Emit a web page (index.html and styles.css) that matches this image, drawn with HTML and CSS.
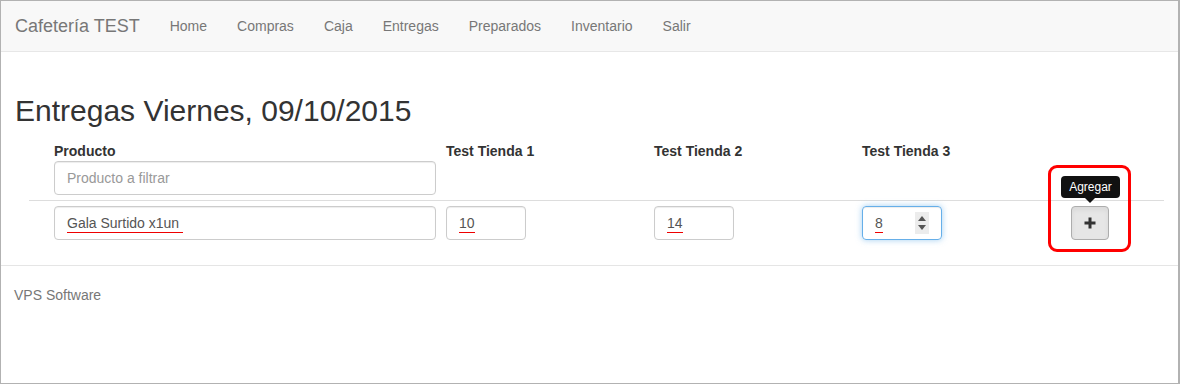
FILE: index.html
```html
<!DOCTYPE html>
<html lang="es">

<head>
  <meta charset="UTF-8" />
  <meta name="viewport" content="width=device-width, initial-scale=1.0" />
  <title>Entregas</title>
  <link rel="stylesheet" href="styles.css">
</head>

<body>
  <div class="frame">

    <nav class="navbar">
      <a class="brand" href="#">Cafetería TEST</a>
      <ul class="nav">
        <li><a href="#">Home</a></li>
        <li><a href="#">Compras</a></li>
        <li><a href="#">Caja</a></li>
        <li><a href="#">Entregas</a></li>
        <li><a href="#">Preparados</a></li>
        <li><a href="#">Inventario</a></li>
        <li><a href="#">Salir</a></li>
      </ul>
    </nav>

    <div class="container">
      <h2>Entregas Viernes, 09/10/2015</h2>

      <div class="grid">
        <!-- cabecera -->
        <div class="cell head"></div>
        <div class="cell head">
          <div class="label">Producto</div>
          <div class="form-control placeholder">Producto a filtrar</div>
        </div>
        <div class="cell head"><div class="label">Test Tienda 1</div></div>
        <div class="cell head"><div class="label">Test Tienda 2</div></div>
        <div class="cell head"><div class="label">Test Tienda 3</div></div>
        <div class="cell head"></div>

        <!-- fila -->
        <div class="cell"></div>
        <div class="cell">
          <div class="form-control"><span class="spell">Gala Surtido x1un&nbsp;</span></div>
        </div>
        <div class="cell">
          <div class="form-control num"><span class="spell">10</span></div>
        </div>
        <div class="cell">
          <div class="form-control num"><span class="spell">14</span></div>
        </div>
        <div class="cell">
          <div class="form-control num focus">
            <span class="spell">8</span>
            <span class="spinner">
              <i class="up"></i>
              <i class="down"></i>
            </span>
          </div>
        </div>
        <div class="cell action">
          <button class="btn" title="Agregar">
            <svg width="12" height="12" viewBox="0 0 12 12">
              <rect x="4.5" y="0.5" width="3" height="11" fill="#333" />
              <rect x="0.5" y="4.5" width="11" height="3" fill="#333" />
            </svg>
          </button>
          <div class="tooltip">Agregar</div>
          <div class="highlight"></div>
        </div>
      </div>
    </div>

    <footer class="footer">VPS Software</footer>

  </div>
</body>

</html>
```

FILE: styles.css
```css
* {
  box-sizing: border-box;
}

body {
  margin: 0;
  font-family: "Liberation Sans", Arial, sans-serif;
  font-size: 14px;
  line-height: 20px;
  color: #333;
  background: #fff;
}

.frame {
  height: 384px;
  border: 1px solid #b2b2b2;
  border-right-width: 2px;
  overflow: hidden;
}

/* barra de navegación */
.navbar {
  height: 51px;
  background: #f8f8f8;
  border-bottom: 1px solid #e7e7e7;
  display: flex;
  padding-left: 14px;
  margin-bottom: 20px;
}

.brand {
  font-size: 18px;
  line-height: 20px;
  padding: 15px 15px 15px 0;
  color: #777;
  text-decoration: none;
}

.nav {
  margin: 0;
  padding: 0;
  list-style: none;
  display: flex;
}

.nav a {
  display: block;
  padding: 15px;
  color: #777;
  text-decoration: none;
}

.container {
  padding: 22px 14px 0;
}

h2 {
  margin: 0 0 10px;
  font-size: 30px;
  font-weight: 400;
  line-height: 33px;
  color: #333;
}

/* tabla */
.grid {
  display: grid;
  grid-template-columns: 20px 392px 208px 208px 208px 1fr;
  margin: 0 0 20px 14px;
}

.cell {
  padding: 5px;
}

.cell:not(.head) {
  border-top: 1px solid #ddd;
}

.label {
  font-weight: 700;
  line-height: 19px;
}

.form-control {
  height: 34px;
  padding: 6px 12px;
  border: 1px solid #ccc;
  border-radius: 4px;
  color: #555;
  box-shadow: inset 0 1px 1px rgba(0, 0, 0, .075);
  white-space: nowrap;
  position: relative;
}

.form-control.placeholder {
  color: #999;
}

.form-control.num {
  width: 80px;
}

.form-control.focus {
  border-color: #66afe9;
  box-shadow: inset 0 1px 1px rgba(0, 0, 0, .075), 0 0 6px rgba(102, 175, 233, .6);
}

.spell {
  border-bottom: 1px solid #e00;
  padding-bottom: 1px;
}

.spinner {
  position: absolute;
  right: 12px;
  top: 5px;
  width: 14px;
  height: 22px;
  background: #ececec;
  display: flex;
  flex-direction: column;
  align-items: center;
  justify-content: center;
  gap: 4px;
}

.spinner i {
  width: 0;
  height: 0;
  border-left: 4px solid transparent;
  border-right: 4px solid transparent;
}

.spinner .up {
  border-bottom: 5px solid #555;
}

.spinner .down {
  border-top: 5px solid #555;
}

.action {
  position: relative;
}

.btn {
  width: 38px;
  height: 34px;
  margin-left: 1px;
  background: #e6e6e6;
  border: 1px solid #adadad;
  border-radius: 4px;
  box-shadow: inset 0 3px 5px rgba(0, 0, 0, .06);
  display: flex;
  align-items: center;
  justify-content: center;
  padding: 0;
}

.tooltip {
  position: absolute;
  left: -4px;
  top: -25px;
  width: 59px;
  height: 22px;
  background: #111;
  color: #fff;
  border-radius: 4px;
  font-size: 12px;
  line-height: 22px;
  text-align: center;
}

.tooltip::after {
  content: "";
  position: absolute;
  left: 24px;
  bottom: -5px;
  border-left: 5px solid transparent;
  border-right: 5px solid transparent;
  border-top: 5px solid #111;
}

.highlight {
  position: absolute;
  left: -17px;
  top: -36px;
  width: 83px;
  height: 87px;
  border: 3px solid #f00;
  border-radius: 9px;
}

.footer {
  border-top: 1px solid #e5e5e5;
  padding: 19px 13px;
  color: #777;
}
```
